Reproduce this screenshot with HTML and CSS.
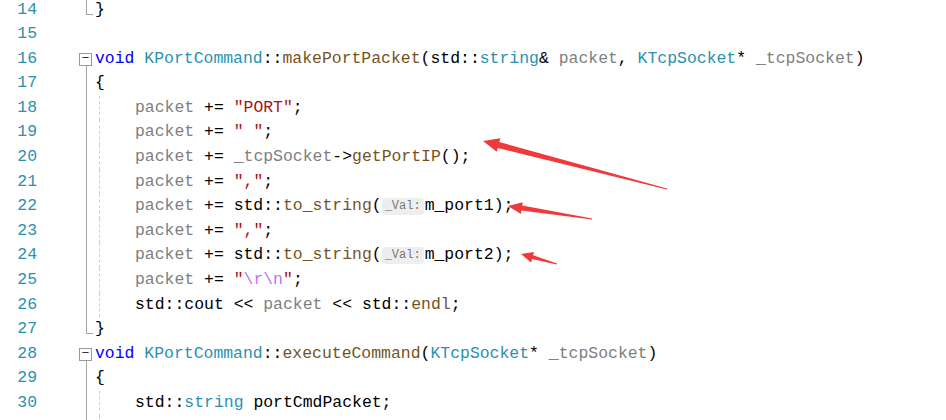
FILE: index.html
```html
<!DOCTYPE html>
<html lang="en">
<head>
    <meta charset="UTF-8">
    <title>KPortCommand.cpp</title>
    <link rel="stylesheet" href="styles.css">
</head>
<body>

    <div class="editor">
        <div class="line"><span class="ln">14</span><span class="fold"><i class="rail end"></i></span><span class="code">}</span></div>
        <div class="line"><span class="ln">15</span><span class="fold"></span><span class="code"></span></div>
        <div class="line"><span class="ln">16</span><span class="fold open"><i class="box">&minus;</i><i class="rail"></i></span><span class="code"><b class="kw">void</b> <b class="ty">KPortCommand</b>::<b class="fn">makePortPacket</b>(std::<b class="ty">string</b>&amp; <b class="pm">packet</b>, <b class="ty">KTcpSocket</b>* <b class="pm">_tcpSocket</b>)</span></div>
        <div class="line"><span class="ln">17</span><span class="fold"><i class="rail"></i></span><span class="code">{</span></div>
        <div class="line"><span class="ln">18</span><span class="fold"><i class="rail"></i></span><i class="guide"></i><span class="code"><b class="pm">packet</b> += <b class="st">"PORT"</b>;</span></div>
        <div class="line"><span class="ln">19</span><span class="fold"><i class="rail"></i></span><i class="guide"></i><span class="code"><b class="pm">packet</b> += <b class="st">" "</b>;</span></div>
        <div class="line"><span class="ln">20</span><span class="fold"><i class="rail"></i></span><i class="guide"></i><span class="code"><b class="pm">packet</b> += <b class="pm">_tcpSocket</b>-&gt;<b class="fn">getPortIP</b>();</span></div>
        <div class="line"><span class="ln">21</span><span class="fold"><i class="rail"></i></span><i class="guide"></i><span class="code"><b class="pm">packet</b> += <b class="st">","</b>;</span></div>
        <div class="line"><span class="ln">22</span><span class="fold"><i class="rail"></i></span><i class="guide"></i><span class="code"><b class="pm">packet</b> += std::<b class="fn">to_string</b>(<span class="hint">_Val:</span>m_port1);</span></div>
        <div class="line"><span class="ln">23</span><span class="fold"><i class="rail"></i></span><i class="guide"></i><span class="code"><b class="pm">packet</b> += <b class="st">","</b>;</span></div>
        <div class="line"><span class="ln">24</span><span class="fold"><i class="rail"></i></span><i class="guide"></i><span class="code"><b class="pm">packet</b> += std::<b class="fn">to_string</b>(<span class="hint">_Val:</span>m_port2);</span></div>
        <div class="line"><span class="ln">25</span><span class="fold"><i class="rail"></i></span><i class="guide"></i><span class="code"><b class="pm">packet</b> += <b class="st">"<b class="esc">\r\n</b>"</b>;</span></div>
        <div class="line"><span class="ln">26</span><span class="fold"><i class="rail"></i></span><i class="guide"></i><span class="code">std::cout &lt;&lt; <b class="pm">packet</b> &lt;&lt; std::<b class="fn">endl</b>;</span></div>
        <div class="line"><span class="ln">27</span><span class="fold"><i class="rail end"></i></span><span class="code">}</span></div>
        <div class="line"><span class="ln">28</span><span class="fold open"><i class="box">&minus;</i><i class="rail"></i></span><span class="code"><b class="kw">void</b> <b class="ty">KPortCommand</b>::<b class="fn">executeCommand</b>(<b class="ty">KTcpSocket</b>* <b class="pm">_tcpSocket</b>)</span></div>
        <div class="line"><span class="ln">29</span><span class="fold"><i class="rail"></i></span><span class="code">{</span></div>
        <div class="line"><span class="ln">30</span><span class="fold"><i class="rail"></i></span><i class="guide"></i><span class="code">std::<b class="ty">string</b> portCmdPacket;</span></div>
        <div class="line"><span class="ln">31</span><span class="fold"><i class="rail"></i></span><i class="guide"></i><span class="code"><b class="fn">makePortPacket</b>(<span class="hint">packet:</span>portCmdPacket, <b class="pm">_tcpSocket</b>);</span></div>
    </div>

    <!-- red markup arrows drawn over the code -->
    <svg class="marks" width="946" height="420" viewBox="0 0 946 420">
        <polygon points="483,141 500.3,138.2 499.3,142.1 667.1,188.5 666.9,189.5 497.7,147.9 496.7,151.8"/>
        <polygon points="508,206 522.7,202.2 522.2,205.6 592.1,218.5 591.9,219.5 521.4,210.6 520.9,214"/>
        <polygon points="521,254 534.1,251.9 533.1,255.3 557.1,263.5 556.9,264.5 532.1,259.1 531.1,262.5"/>
    </svg>

</body>
</html>
```

FILE: styles.css
```css
* { box-sizing: border-box; margin: 0; padding: 0; }
body {
    background: #fff;
    color: #000;
    font-family: "Liberation Mono", "DejaVu Sans Mono", monospace;
    font-size: 16.45px;
    overflow: hidden;
    height: 420px;
    position: relative;
}

.editor { margin-top: -2.5px; }

.line {
    display: flex;
    height: 24.6px;
    line-height: 24.6px;
    white-space: pre;
}

.ln {
    width: 37px;
    text-align: right;
    color: #2b91af;
}

.fold {
    width: 58px;
    display: flex;
    flex-direction: column;
    align-items: flex-start;
}

.rail {
    display: block;
    flex: 1;
    margin-left: 49px;
    border-left: 1px solid #a5a5a5;
}
.rail.end {
    flex: 0 0 17px;
    width: 7px;
    border-bottom: 1px solid #a5a5a5;
}

.box {
    display: block;
    margin: 6px 0 0 42px;
    width: 13px;
    height: 13px;
    border: 1px solid #9a9a9a;
    font-style: normal;
    font-size: 13px;
    line-height: 10px;
    text-align: center;
    color: #333;
}

.guide {
    width: 36px;
    margin-left: 4px;
    border-left: 1px dashed #cfcfcf;
}

.code b { font-weight: normal; }
.kw { color: #0000ff; }
.ty { color: #2b91af; }
.fn { color: #74531f; }
.pm { color: #808080; }
.st { color: #a31515; }
.st .esc { color: #b776fb; }

.hint {
    display: inline-block;
    vertical-align: 1px;
    height: 17px;
    line-height: 17px;
    padding: 0 3px;
    margin-right: 1px;
    border-radius: 3px;
    background: #eeeeee;
    color: #7a7a7a;
    font-size: 12px;
}

.marks {
    position: absolute;
    top: 0;
    left: 0;
    pointer-events: none;
}
.marks polygon { fill: #f0393a; }
```
